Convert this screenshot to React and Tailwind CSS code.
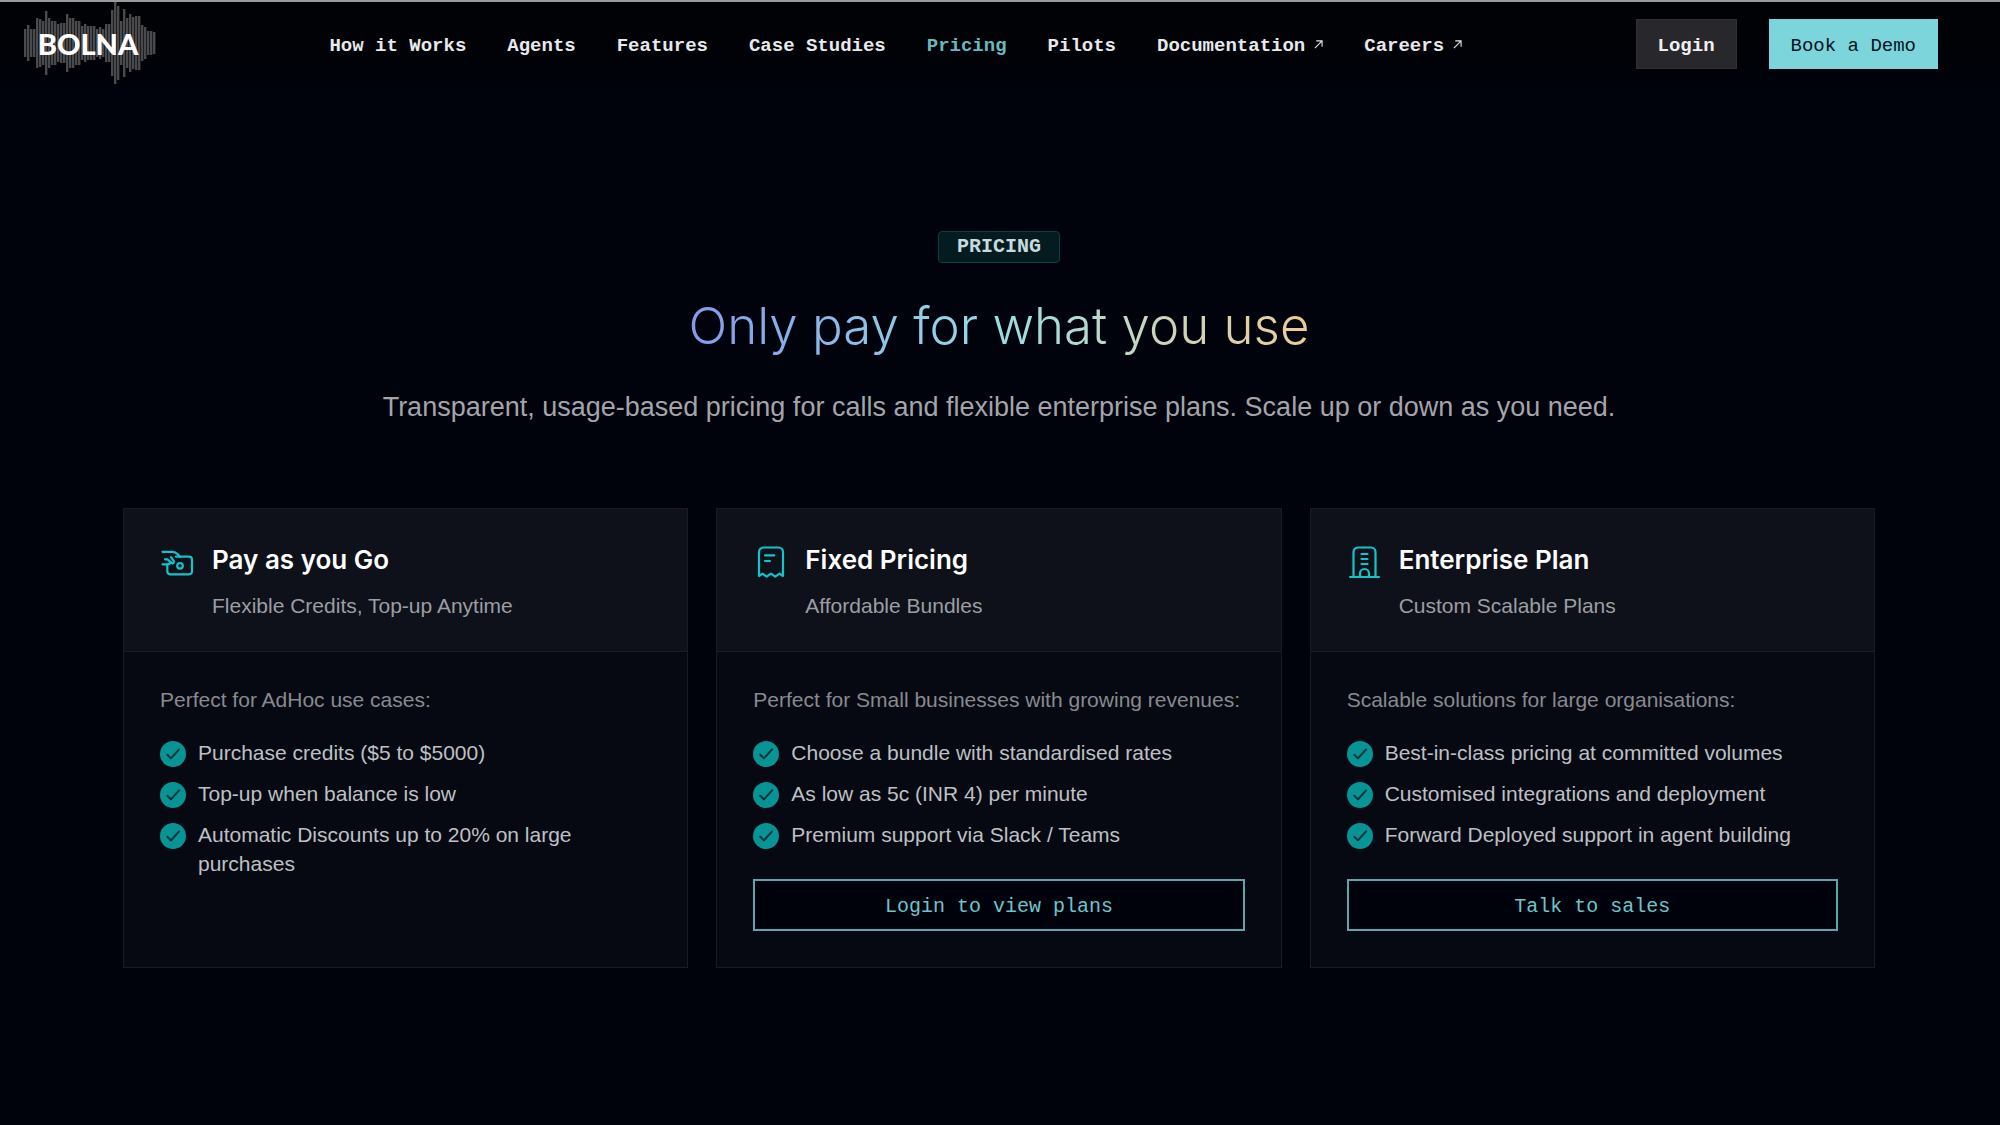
const navLinks = [
    { label: "How it Works" },
    { label: "Agents" },
    { label: "Features" },
    { label: "Case Studies" },
    { label: "Pricing", active: true },
    { label: "Pilots" },
    { label: "Documentation", external: true },
    { label: "Careers", external: true },
];

const plans = [
    {
        icon: WalletIcon,
        title: "Pay as you Go",
        tagline: "Flexible Credits, Top-up Anytime",
        intro: "Perfect for AdHoc use cases:",
        features: [
            "Purchase credits ($5 to $5000)",
            "Top-up when balance is low",
            "Automatic Discounts up to 20% on large purchases",
        ],
    },
    {
        icon: ReceiptIcon,
        title: "Fixed Pricing",
        tagline: "Affordable Bundles",
        intro: "Perfect for Small businesses with growing revenues:",
        features: [
            "Choose a bundle with standardised rates",
            "As low as 5c (INR 4) per minute",
            "Premium support via Slack / Teams",
        ],
        cta: "Login to view plans",
    },
    {
        icon: BuildingIcon,
        title: "Enterprise Plan",
        tagline: "Custom Scalable Plans",
        intro: "Scalable solutions for large organisations:",
        features: [
            "Best-in-class pricing at committed volumes",
            "Customised integrations and deployment",
            "Forward Deployed support in agent building",
        ],
        cta: "Talk to sales",
    },
];

// half height of every bar in the logo's wave form
const wave = [
    14, 18, 14, 14, 25, 24, 22, 32, 25, 22, 22, 19, 20, 20, 29, 25, 25, 22, 22,
    17, 19, 17, 17, 17, 14, 16, 14, 19, 19, 33, 41, 37, 22, 34, 25, 29, 26, 27,
    27, 18, 16, 12, 12, 11,
];

function Logo() {
    return (
        <a href="#" className="grid place-items-center">
            <svg
                viewBox="0 0 132 84"
                className="col-start-1 row-start-1 w-[132px] h-[84px]"
                fill="#4a4a4d"
                aria-hidden="true"
            >
                {wave.map((h, i) => (
                    <rect key={i} x={i * 3} y={41 - h} width="2.4" height={h * 2} />
                ))}
            </svg>
            <span className="col-start-1 row-start-1 pr-1 font-[Lato,sans-serif] font-black text-[29px] leading-8 text-white">
                BOLNA
            </span>
        </a>
    );
}

function WalletIcon() {
    return (
        <svg
            viewBox="0 0 34 34"
            className="w-[34px] h-[34px]"
            fill="none"
            stroke="currentColor"
            strokeWidth="2.2"
            strokeLinecap="round"
            strokeLinejoin="round"
            aria-hidden="true"
        >
            <path d="M2.5 6.8h10c2.500 0 4 1.200 5.500 2.800l1.800 2" />
            <path d="M16 11.700h13a3 3 0 0 1 3 3v11.600a3 3 0 0 1-3 3H10.300a3 3 0 0 1-3-3v-6.800" />
            <path d="M2.500 19.300h4.800c1.800 0 3.200-.8 3.200-2.500" />
            <path d="M5 14.300h2.500l4 3.500c1.400 1.200 3.200-.4 2.200-2l-2.700-3.600" />
            <circle cx="20" cy="20.800" r="2.800" />
        </svg>
    );
}

function ReceiptIcon() {
    return (
        <svg
            viewBox="0 0 34 34"
            className="w-[34px] h-[34px]"
            fill="none"
            stroke="currentColor"
            strokeWidth="2.2"
            strokeLinecap="round"
            strokeLinejoin="round"
            aria-hidden="true"
        >
            <path d="M6 31V7a4.500 4.500 0 0 1 4.500-4.500h15A4.500 4.500 0 0 1 30 7v24l-3.500-2.300-4.200 3-4.300-3-4.300 3-4.200-3z" />
            <path d="M12 10.300h9.300M12 16h5" />
        </svg>
    );
}

function BuildingIcon() {
    return (
        <svg
            viewBox="0 0 34 34"
            className="w-[34px] h-[34px]"
            fill="none"
            stroke="currentColor"
            strokeWidth="2.2"
            strokeLinecap="round"
            strokeLinejoin="round"
            aria-hidden="true"
        >
            <path d="M3 32h29" />
            <path d="M6.500 32V7A4.500 4.500 0 0 1 11 2.500h13A4.500 4.500 0 0 1 28.500 7v25" />
            <path d="M14.500 9h6M14.500 14h6M14.500 19h6" />
            <path d="M13 32v-3.500a4.500 4.500 0 0 1 9 0V32" />
        </svg>
    );
}

function CheckIcon() {
    return (
        <svg viewBox="0 0 26 26" className="w-[26px] h-[26px] mt-[3px] shrink-0" aria-hidden="true">
            <circle cx="13" cy="13" r="13" fill="#069494" />
            <path
                d="M7.300 13.800l3.600 3.600 8.200-9"
                fill="none"
                stroke="#06303a"
                strokeWidth="2"
                strokeLinecap="round"
                strokeLinejoin="round"
            />
        </svg>
    );
}

function ExternalArrow() {
    return (
        <svg
            viewBox="0 0 10 10"
            className="w-[9px] h-[9px] mb-1"
            fill="none"
            stroke="currentColor"
            strokeWidth="1.200"
            aria-hidden="true"
        >
            <path d="M1 9l8-8M2.500 1H9v6.500" />
        </svg>
    );
}

function PlanCard({ icon: Icon, title, tagline, intro, features, cta }) {
    return (
        <article className="flex flex-col border border-[#1a1c21] bg-[#060912]">
            <div className="flex gap-[18px] px-9 pt-[35px] pb-[31px] border-b border-[#1c1e23] bg-[#0e1119]">
                <div className="mt-px shrink-0 text-[#12c3c9]">
                    <Icon />
                </div>
                <div>
                    <h2 className="font-[Inter,sans-serif] text-[26px] leading-8 font-semibold text-white">
                        {title}
                    </h2>
                    <p className="mt-4 text-[21px] leading-7 text-[#9c9ea3]">{tagline}</p>
                </div>
            </div>
            <div className="px-9 pt-[34px] pb-9">
                <p className="text-[21px] leading-7 text-[#888a8f]">{intro}</p>
                <ul className="mt-6 space-y-3">
                    {features.map((feature) => (
                        <li key={feature} className="flex gap-3">
                            <CheckIcon />
                            <span className="text-[21px] leading-[29px] text-[#bec0c4]">
                                {feature}
                            </span>
                        </li>
                    ))}
                </ul>
                {cta && (
                    <button
                        type="button"
                        className="mt-[30px] w-full border-2 border-[#5fa3ab] bg-[#00020b] pt-3 pb-2 font-[Liberation_Mono,monospace] text-xl leading-7 text-[#6cc5cb]"
                    >
                        {cta}
                    </button>
                )}
            </div>
        </article>
    );
}

export default function App() {
    return (
        <div className="min-h-screen bg-[#00020c] font-[Liberation_Sans,Arial,sans-serif] text-white">
            <header className="flex items-center justify-between border-t-2 border-[#959ba0] bg-linear-to-b from-[#010204] to-[#00020a] pl-6 pr-[62px] font-[Liberation_Mono,monospace] text-[19px] leading-7">
                <Logo />
                <nav className="flex gap-[41px] pt-1 font-bold">
                    {navLinks.map(({ label, active, external }) => (
                        <a
                            key={label}
                            href="#"
                            className={
                                active
                                    ? "text-[#68b9bf]"
                                    : "flex items-center gap-[9px] text-[#e8e9eb]"
                            }
                        >
                            {label}
                            {external && <ExternalArrow />}
                        </a>
                    ))}
                </nav>
                <div className="flex gap-8">
                    <button
                        type="button"
                        className="border border-[#303034] bg-[#28282c] px-[21px] pt-3 pb-2 font-bold text-[#f0f0f2]"
                    >
                        Login
                    </button>
                    <button
                        type="button"
                        className="border border-[#7dd5dc] bg-[#7dd5dc] px-[21px] pt-3 pb-2 text-[#04141f]"
                    >
                        Book a Demo
                    </button>
                </div>
            </header>

            <main className="pl-[123px] pr-[125px] pt-[145px] pb-20">
                <section className="flex flex-col items-center text-center">
                    <p className="rounded-sm border border-[#0b3f3f] bg-[#041c20] px-[18px] py-px font-[Liberation_Mono,monospace] text-xl leading-7 font-bold text-[#c5dbdf]">
                        PRICING
                    </p>
                    <h1 className="mt-[33px] bg-linear-to-r from-[#839ae8] via-[#98dde3] to-[#edcb96] bg-clip-text font-[Inter,sans-serif] text-[51px] leading-[60px] font-light text-transparent">
                        Only pay for what you use
                    </h1>
                    <p className="mt-[33px] text-[27px] leading-9 text-[#a3a5aa]">
                        Transparent, usage-based pricing for calls and flexible enterprise
                        plans. Scale up or down as you need.
                    </p>
                </section>

                <section className="mt-[83px] grid grid-cols-3 gap-7">
                    {plans.map((plan) => (
                        <PlanCard key={plan.title} {...plan} />
                    ))}
                </section>
            </main>
        </div>
    );
}
